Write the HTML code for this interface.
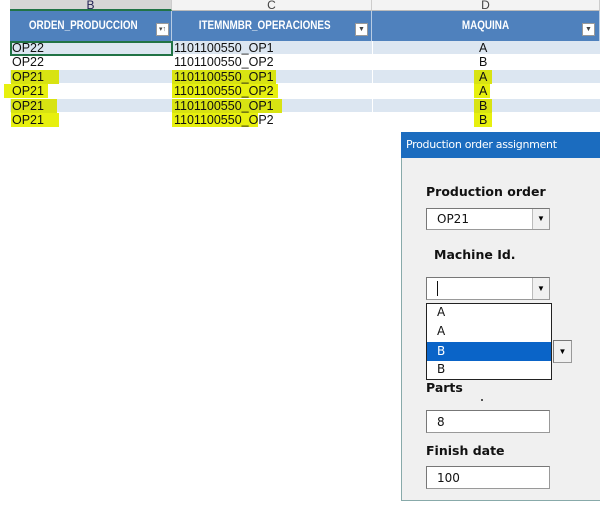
<!DOCTYPE html>
<html><head><style>
*{margin:0;padding:0;box-sizing:border-box}
body{width:600px;height:522px;background:#fff;position:relative;overflow:hidden;font-family:"Liberation Sans",Arial,sans-serif}
.a{position:absolute}
.cl{top:0;height:11px;font-size:12px;color:#444;text-align:center;line-height:11px;background:#f3f3f3;border-right:1px solid #ccc;border-bottom:1px solid #bbb;overflow:hidden}
.hd{top:11px;height:30px;background:#4f81bd;color:#fff;font-weight:bold;font-size:11.5px;text-align:center;line-height:30px;border-right:1px solid #b8cce4}
.hd span{display:inline-block;transform:scaleX(0.86)}
.fb{width:13px;height:13px;background:#fff;border:1px solid #999;top:23px;font-size:7px;color:#444;line-height:11px;text-align:center}
.r{height:14.4px;left:10px;width:590px;border-bottom:1px solid #fff}
.t{font-size:12.5px;line-height:14px;color:#111;height:14px}
.hl{background:#e7f00f}
.lbl{font-family:"DejaVu Sans",sans-serif;font-weight:bold;font-size:12.5px;color:#111}
.box{background:#fff;border:1px solid #999;border-top-color:#777;border-left-color:#777}
.btn{width:17px;background:#f0f0f0;border-left:1px solid #bbb;font-size:8px;text-align:center}
.v{font-family:"DejaVu Sans",sans-serif;font-size:12px;color:#111}
</style></head><body>
<div class="a cl" style="left:10px;width:162px;background:#d6d6d6;color:#225;border-bottom:2px solid #217346">B</div>
<div class="a cl" style="left:172px;width:200px">C</div>
<div class="a cl" style="left:372px;width:228px">D</div>
<div class="a hd" style="left:10px;width:162px;padding-right:14px"><span>ORDEN_PRODUCCION</span></div>
<div class="a hd" style="left:172px;width:200px;padding-right:14px"><span>ITEMNMBR_OPERACIONES</span></div>
<div class="a hd" style="left:372px;width:228px"><span>MAQUINA</span></div>
<div class="a fb" style="left:156px">▾↑</div>
<div class="a fb" style="left:355px">▼</div>
<div class="a fb" style="left:582px">▼</div>

<div class="a r" style="top:41px;background:#dce6f1"></div>
<div class="a r" style="top:55.5px;background:#fff"></div>
<div class="a r" style="top:70px;background:#dce6f1"></div>
<div class="a r" style="top:84.5px;background:#fff"></div>
<div class="a r" style="top:99px;background:#dce6f1"></div>
<div class="a r" style="top:113.5px;background:#fff"></div>
<div class="a" style="left:172px;top:41px;width:1px;height:87px;background:#fff"></div>
<div class="a" style="left:372px;top:41px;width:1px;height:87px;background:#fff"></div>
<div class="a" style="left:10px;top:41px;width:163px;height:15px;border:2px solid #217346"></div>

<div class="a t" style="left:12px;top:41px">OP22</div>
<div class="a t" style="left:12px;top:55px">OP22</div>
<div class="a t hl" style="left:11px;top:70px;width:48px;padding-left:1px;background:#d8e312">OP21</div>
<div class="a t hl" style="left:4px;top:84px;width:44px;padding-left:8px">OP21</div>
<div class="a t hl" style="left:11px;top:99px;width:46px;padding-left:1px;background:#d8e312">OP21</div>
<div class="a t hl" style="left:11px;top:113px;width:48px;padding-left:1px">OP21</div>

<div class="a t" style="left:174px;top:41px">1101100550_OP1</div>
<div class="a t" style="left:174px;top:55px">1101100550_OP2</div>
<div class="a t hl" style="left:172px;top:70px;width:104px;padding-left:2px;background:#d8e312">1101100550_OP1</div>
<div class="a t hl" style="left:172px;top:84px;width:106px;padding-left:2px">1101100550_OP2</div>
<div class="a t hl" style="left:172px;top:99px;width:110px;padding-left:2px;background:#d8e312">1101100550_OP1</div>
<div class="a t hl" style="left:172px;top:113px;width:86px;padding-left:2px">1101100550_OP2</div>

<div class="a t" style="left:479px;top:41px">A</div>
<div class="a t" style="left:479px;top:55px">B</div>
<div class="a t hl" style="left:474px;top:70px;width:18px;padding-left:5px;background:#d8e312">A</div>
<div class="a t hl" style="left:474px;top:84px;width:16px;padding-left:5px">A</div>
<div class="a t hl" style="left:474px;top:99px;width:18px;padding-left:5px;background:#d8e312">B</div>
<div class="a t hl" style="left:474px;top:113px;width:18px;padding-left:5px">B</div>

<div class="a" style="left:401px;top:132px;width:199px;height:369px;background:#f0f0f0;border-left:1px solid #8aa;border-bottom:1px solid #8aa"></div>
<div class="a" style="left:401px;top:132px;width:199px;height:26px;background:#1b6cbf;color:#fff;font-size:11px;line-height:26px;padding-left:5px;font-family:'DejaVu Sans',sans-serif;letter-spacing:-0.3px">Production order assignment</div>

<div class="a lbl" style="left:426px;top:184px">Production order</div>
<div class="a box" style="left:426px;top:208px;width:124px;height:22px"><span class="a v" style="left:10px;top:3px">OP21</span><div class="a btn" style="right:0;top:0;height:20px;line-height:20px">▼</div></div>
<div class="a lbl" style="left:434px;top:247px">Machine Id.</div>
<div class="a box" style="left:426px;top:277px;width:124px;height:23px"><span class="a" style="left:10px;top:3px;width:1px;height:15px;background:#111"></span><div class="a btn" style="right:0;top:0;height:21px;line-height:21px">▼</div></div>
<div class="a box" style="left:553px;top:340px;width:19px;height:23px"><div class="a btn" style="right:0;top:0;height:21px;line-height:21px;border:0">▼</div></div>
<div class="a" style="left:426px;top:303px;width:126px;height:77px;background:#fff;border:1px solid #222">
<div class="a v" style="left:10px;top:1px">A</div>
<div class="a v" style="left:10px;top:20px">A</div>
<div class="a v" style="left:0;top:38px;width:124px;height:19px;background:#0a64c8;color:#fff;padding-left:10px;line-height:19px">B</div>
<div class="a v" style="left:10px;top:58px">B</div>
</div>
<div class="a lbl" style="left:426px;top:380px">Parts</div>
<div class="a" style="left:481px;top:399px;width:2px;height:2px;background:#555"></div>
<div class="a box" style="left:426px;top:410px;width:124px;height:23px"><span class="a v" style="left:10px;top:4px">8</span></div>
<div class="a lbl" style="left:426px;top:443px">Finish date</div>
<div class="a box" style="left:426px;top:466px;width:124px;height:23px"><span class="a v" style="left:10px;top:4px">100</span></div>
</body></html>
